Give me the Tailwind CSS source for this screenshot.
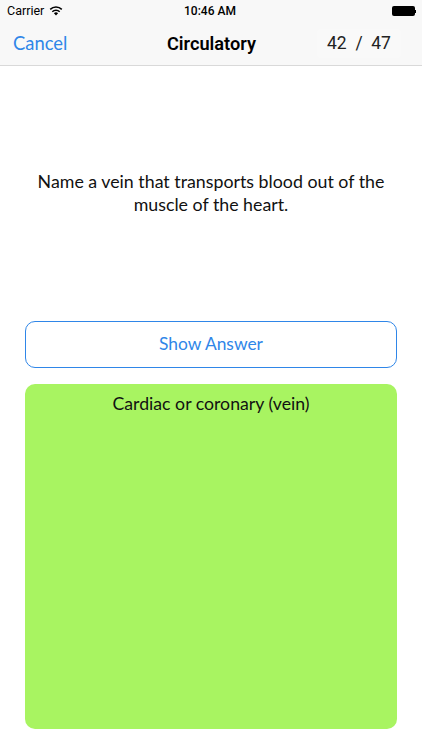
<!DOCTYPE html>
<html><head><meta charset="utf-8"><script src="https://cdn.jsdelivr.net/npm/@tailwindcss/browser@4"></script></head>
<body class="bg-white font-['Open_Sans','Liberation_Sans',sans-serif]">
<div class="w-[422px] h-[750px] overflow-hidden flex flex-col">
  <header class="h-[66px] bg-[#f8f8f8] border-b border-[#d9d9d9] flex flex-col shrink-0">
    <div class="relative h-[22px] flex items-center justify-between pl-[7px] pr-[6px] text-[12px] font-['Roboto'] text-black">
      <div class="flex items-center gap-[5px]"><span class="text-[12.5px]">Carrier</span>
        <svg width="14" height="10" viewBox="0 0 14 10"><path d="M7 9.6 4.9 7.3a3 3 0 0 1 4.2 0Z" fill="#000"/><path d="M3.3 5.7a5.3 5.3 0 0 1 7.4 0M1.2 3.4a8.3 8.3 0 0 1 11.6 0" fill="none" stroke="#000" stroke-width="1.5"/></svg>
      </div>
      <span class="absolute left-[184px] font-medium">10:46 AM</span>
      <div class="flex items-center"><div class="w-[23px] h-[10px] bg-black rounded-[2px]"></div><div class="w-[1.5px] h-[3px] bg-black"></div></div>
    </div>
    <div class="relative flex-1 flex items-center justify-center">
      <span class="absolute left-[13px] text-[18.4px] text-[#2f86e8] font-['Lato']">Cancel</span>
      <span class="ml-[1px] text-[18.2px] font-semibold text-black font-['Roboto']">Circulatory</span>
      <span class="absolute left-[317px] w-[84px] h-[29px] flex items-center justify-center bg-[#f9f9f9] rounded-[4px] text-[17.5px] text-[#222] font-['Roboto'] whitespace-pre">42  /  47</span>
    </div>
  </header>
  <main class="flex-1 px-[25px] flex flex-col">
    <p class="-mx-[5px] h-[255px] pt-[104px] text-center text-[17.8px] leading-[23px] text-[#111] font-['Lato']">Name a vein that transports blood out of the muscle of the heart.</p>
    <button class="h-[47px] border border-[#2f86e8] rounded-[10px] text-[#2f86e8] text-[17.4px] font-['Lato'] bg-white shrink-0">Show Answer</button>
    <section class="mt-[16px] h-[345px] bg-[#a8f461] rounded-[10px] text-center text-[17.7px] leading-[23px] pt-[8px] text-[#111] font-['Lato'] shrink-0">Cardiac or coronary (vein)</section>
  </main>
</div>
</body></html>
